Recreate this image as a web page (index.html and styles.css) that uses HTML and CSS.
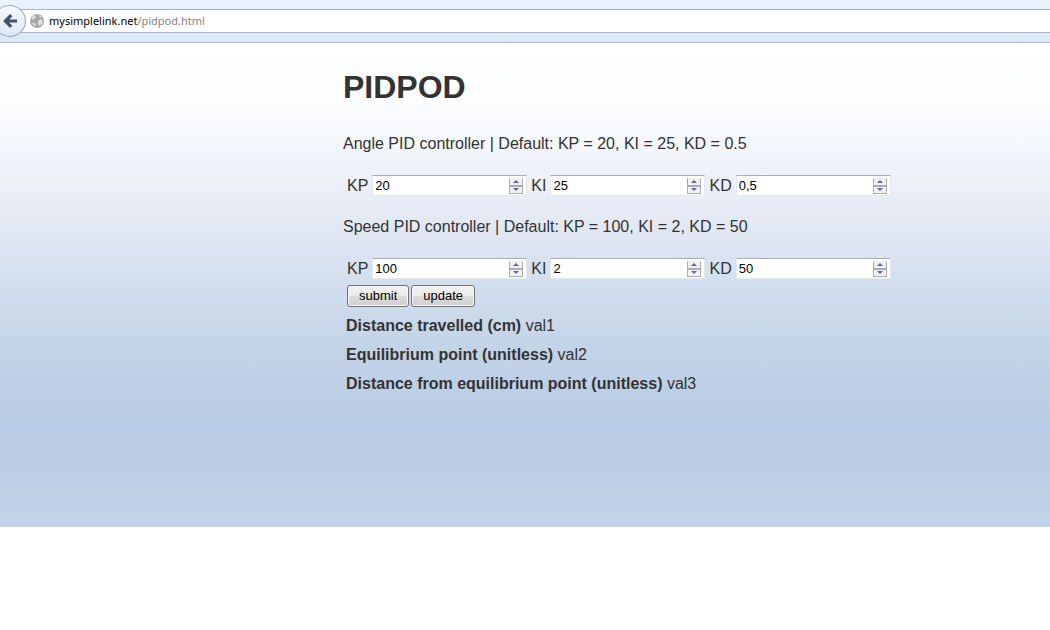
FILE: index.html
```html
<!DOCTYPE html>
<html lang="en">
<head>
<meta charset="utf-8">
<title>PIDPOD</title>
<link rel="stylesheet" href="styles.css">
</head>
<body>
<header class="toolbar">
  <button class="back" type="button" aria-label="Back">
    <svg width="32" height="32" viewBox="0 0 32 32"><path d="M11.5 15H23M17.2 9.2L11.4 15L17.2 20.8" fill="none" stroke="#46515f" stroke-width="3.2"/></svg>
  </button>
  <div class="address">
    <svg class="globe" width="14" height="14" viewBox="0 0 14 14"><circle cx="7" cy="7" r="7" fill="#a6a6a6"/><path d="M1 4L4 1L6 2L5 4L3 6ZM8 7L11 5L13 7L12 10L9 12L8 10ZM2 9L5 9L6 12L4 12ZM9 1L12 3L10 4Z" fill="#dedede"/></svg>
    <span class="url"><span class="domain">mysimplelink.net</span>/pidpod.html</span>
  </div>
</header>
<main class="page">
  <form class="content">
    <h1 class="title">PIDPOD</h1>
    <p class="caption">Angle PID controller | Default: KP = 20, KI = 25, KD = 0.5</p>
    <div class="row">
      <label for="akp">KP</label>
      <span class="field"><input class="value" id="akp" type="number" value="20"><span class="stepper"><button class="step up" type="button" aria-label="Increase angle KP"></button><button class="step down" type="button" aria-label="Decrease angle KP"></button></span></span>
      <label for="aki">KI</label>
      <span class="field"><input class="value" id="aki" type="number" value="25"><span class="stepper"><button class="step up" type="button" aria-label="Increase angle KI"></button><button class="step down" type="button" aria-label="Decrease angle KI"></button></span></span>
      <label for="akd">KD</label>
      <span class="field"><input class="value" id="akd" type="text" inputmode="decimal" value="0,5"><span class="stepper"><button class="step up" type="button" aria-label="Increase angle KD"></button><button class="step down" type="button" aria-label="Decrease angle KD"></button></span></span>
    </div>
    <p class="caption">Speed PID controller | Default: KP = 100, KI = 2, KD = 50</p>
    <div class="row">
      <label for="skp">KP</label>
      <span class="field"><input class="value" id="skp" type="number" value="100"><span class="stepper"><button class="step up" type="button" aria-label="Increase speed KP"></button><button class="step down" type="button" aria-label="Decrease speed KP"></button></span></span>
      <label for="ski">KI</label>
      <span class="field"><input class="value" id="ski" type="number" value="2"><span class="stepper"><button class="step up" type="button" aria-label="Increase speed KI"></button><button class="step down" type="button" aria-label="Decrease speed KI"></button></span></span>
      <label for="skd">KD</label>
      <span class="field"><input class="value" id="skd" type="number" value="50"><span class="stepper"><button class="step up" type="button" aria-label="Increase speed KD"></button><button class="step down" type="button" aria-label="Decrease speed KD"></button></span></span>
    </div>
    <div class="actions">
      <button class="action" type="button">submit</button>
      <button class="action" type="button">update</button>
    </div>
    <div class="reading"><b>Distance travelled (cm)</b> val1</div>
    <div class="reading"><b>Equilibrium point (unitless)</b> val2</div>
    <div class="reading"><b>Distance from equilibrium point (unitless)</b> val3</div>
  </form>
</main>
</body>
</html>
```
FILE: styles.css
```css
* { box-sizing: border-box; }

body {
  margin: 0;
  background: #fff;
  color: #333;
  font: 16px/20px "Liberation Sans", Arial, sans-serif;
}

.toolbar {
  position: relative;
  padding: 9px 0;
  border-bottom: 1px solid #a8bbd2;
  background: linear-gradient(#ebf3fb, #d9e8f7);
}

.address {
  display: flex;
  align-items: center;
  gap: 5px;
  height: 24px;
  padding-left: 30px;
  border: solid #a5b6cc;
  border-width: 1px 0;
  background: #fff;
}

.url {
  color: #858585;
  font: 11px/16px "Noto Sans", sans-serif;
}

.domain { color: #000; }

.back {
  position: absolute;
  left: -7px;
  top: 5px;
  width: 33px;
  height: 32px;
  padding: 0;
  border: 1px solid #94a7c0;
  border-radius: 50%;
  background: linear-gradient(#f5f9fd, #dce8f5);
}

.back svg { display: block; }

.page {
  padding: 24px 0 129px calc(50% - 182px);
  background: linear-gradient(#fff 0%, #fcfdfe 12%, #f3f6fb 22%, #e8ecf5 33%, #d9e3f0 45%, #c5d5e8 61%, #b8cce4 78%, #b9cbe4 84%, #c3d4e9 100%);
}

.title {
  margin: 0 0 27px;
  font-size: 32px;
  line-height: 40px;
}

.caption { margin: 0 0 20px; }

.row {
  display: flex;
  align-items: center;
  gap: 4px;
  height: 23px;
  padding-left: 4px;
  margin-bottom: 20px;
}

.field {
  display: flex;
  align-items: center;
  width: 155px;
  height: 21px;
  padding-right: 3px;
  border: 1px solid #e3e9f0;
  border-top-color: #abadb3;
  background: #fff;
}

.value {
  flex: 1;
  min-width: 0;
  padding: 0 2px;
  border: 0;
  outline: 0;
  background: none;
  color: #000;
  font: 13px/16px "Liberation Sans", Arial, sans-serif;
  appearance: textfield;
}

.value::-webkit-inner-spin-button { appearance: none; }

.stepper {
  display: grid;
  width: 14px;
  height: 16px;
}

.step {
  display: grid;
  place-items: center;
  padding: 0;
  border: 1px solid #acacb0;
  background: #f1f1f1;
}

.up { border-top-color: #eee; }

.step::before {
  content: "";
  border: 3px solid transparent;
}

.up::before {
  border-top: 0;
  border-bottom-color: #5468ae;
}

.down::before {
  border-bottom: 0;
  border-top-color: #5468ae;
}

.actions {
  display: flex;
  gap: 2px;
  margin-top: -15px;
  padding-left: 4px;
}

.action {
  height: 22px;
  padding: 0 11px;
  border: 1px solid #707070;
  border-radius: 3px;
  background: linear-gradient(#f2f2f2 0%, #ebebeb 50%, #dddddd 50%, #cfcfcf 100%);
  box-shadow: inset 0 0 0 1px #f8f8f8;
  color: #000;
  font: 13px/16px "Liberation Sans", Arial, sans-serif;
}

.reading {
  padding-left: 3px;
  line-height: 29px;
}

.actions + .reading { margin-top: 4px; }
```
